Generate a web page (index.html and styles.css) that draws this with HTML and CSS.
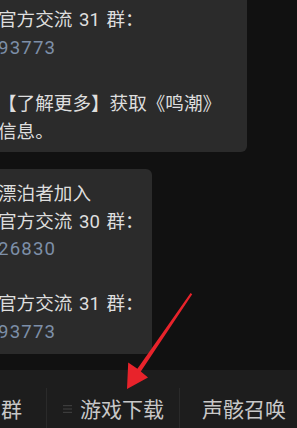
FILE: index.html
```html
<!DOCTYPE html>
<html lang="zh-CN">
<head>
<meta charset="utf-8">
<link rel="stylesheet" href="styles.css">
</head>
<body>
<div class="screen">
  <main class="chat">
    <div class="bubble bubble--wide">
      <p class="line num">26830</p>
      <p class="line">官方交流 31 群：</p>
      <p class="line num">93773</p>
      <p class="line empty">&nbsp;</p>
      <p class="line">【了解更多】获取《鸣潮》</p>
      <p class="line">信息。</p>
    </div>
    <div class="bubble bubble--narrow">
      <p class="line">漂泊者加入</p>
      <p class="line">官方交流 30 群：</p>
      <p class="line num">26830</p>
      <p class="line empty">&nbsp;</p>
      <p class="line">官方交流 31 群：</p>
      <p class="line num">93773</p>
    </div>
  </main>
  <nav class="menu">
    <div class="menu-item menu-item--first">群</div>
    <div class="menu-item menu-item--icon">
      <svg class="menu-icon" width="9" height="8" viewBox="0 0 9 8"><rect x="0" y="0" width="9" height="1.2"/><rect x="0" y="3.4" width="9" height="1.2"/><rect x="0" y="6.8" width="9" height="1.2"/></svg>
      <span>游戏下载</span>
    </div>
    <div class="menu-item menu-item--last">声骸召唤</div>
  </nav>
  <svg class="arrow" width="297" height="428" viewBox="0 0 297 428">
    <polygon points="190.6,293 192.2,294.2 140.8,371.4 148,377.5 127,389 128.2,362.5 137.4,368.8"/>
  </svg>
</div>
</body>
</html>
```

FILE: styles.css
```css
* { box-sizing: border-box; }
html, body {
  margin: 0;
  padding: 0;
  background: #111111;
}
.screen {
  position: relative;
  width: 297px;
  height: 428px;
  overflow: hidden;
  display: flex;
  flex-direction: column;
  font-family: Roboto, "Noto Sans CJK SC", sans-serif;
}
.chat {
  display: flex;
  flex-direction: column;
  align-items: flex-start;
  gap: 17px;
  margin-left: -12px;
  flex: 1;
}
.bubble {
  background: #2b2b2b;
  border-radius: 6px;
  padding: 12px 8px 8px 10px;
  color: #dedede;
  font-size: 18.6px;
  word-spacing: 2px;
}
.bubble--wide {
  width: 259px;
  margin-top: -34px;
  line-height: 28px;
  padding-bottom: 6px;
}
.bubble--narrow {
  width: 164px;
  line-height: 27.5px;
}
.line {
  margin: 0;
  white-space: nowrap;
}
.num {
  color: #7d8fa8;
  letter-spacing: 1.2px;
}
.menu {
  height: 58px;
  background: #1d1d1d;
  display: flex;
  align-items: flex-end;
  padding-top: 18px;
  color: #c8c8c8;
  font-family: "Noto Sans CJK SC", sans-serif;
  font-size: 21px;
  line-height: 40px;
}
.menu-item {
  height: 40px;
  display: flex;
  align-items: center;
  white-space: nowrap;
}
.menu-item--first {
  padding: 0 24px 0 1px;
}
.menu-item--icon {
  border-left: 1px solid #2a2a2a;
  padding: 0 15px 0 16px;
  gap: 8px;
}
.menu-item--last {
  border-left: 1px solid #2a2a2a;
  padding-left: 22px;
}
.menu-icon {
  fill: #3c3c3c;
  margin-top: 1px;
}
.arrow {
  position: absolute;
  top: 0;
  left: 0;
  fill: #e8232b;
  pointer-events: none;
}
```
